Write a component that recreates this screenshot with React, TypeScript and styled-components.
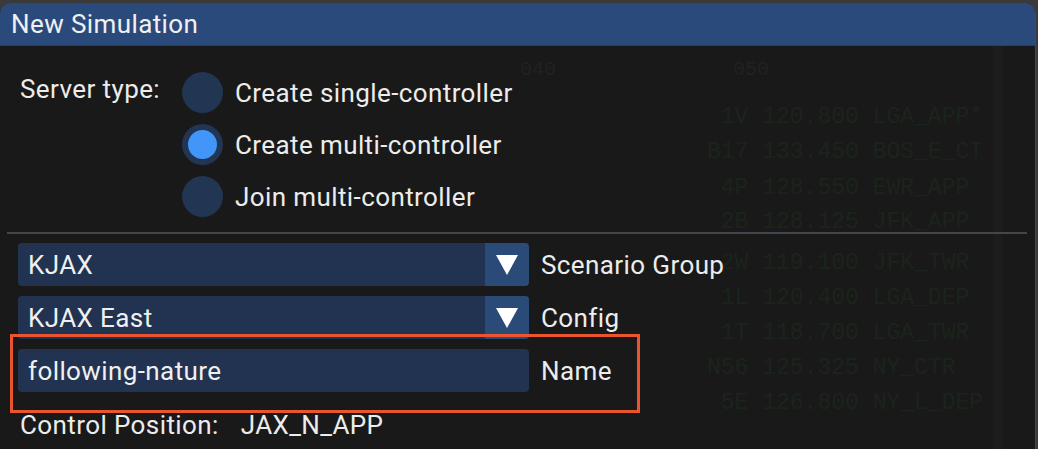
import React from "react";
import styled, { createGlobalStyle } from "styled-components";

const GlobalStyle = createGlobalStyle`
  html, body { margin: 0; padding: 0; background: #3a3a3a; }
  body { font-family: Roboto, "Noto Sans", "Liberation Sans", sans-serif; color: #ececec; }
  * { box-sizing: border-box; }
`;

const Window = styled.div`
  margin-top: 3px;
  width: 1036px;
  height: 446px;
  background: #191919;
  border-right: 1px solid #4a4a4a;
  border-radius: 10px 10px 0 0;
  overflow: hidden;
  position: relative;
  display: flex;
  flex-direction: column;
  font-size: 26px;
  letter-spacing: 0.4px;
`;

const TitleBar = styled.div`
  height: 43px;
  flex: none;
  background: #2b4a7c;
  display: flex;
  align-items: center;
  padding-left: 11px;
  line-height: 1;
  color: #f0f0f0;
  border-bottom: 1px solid #243f6a;
`;

const Body = styled.div`
  position: relative;
  flex: 1;
  display: flex;
  flex-direction: column;
`;

const Scope = styled.div`
  position: absolute;
  inset: 0;
  pointer-events: none;
  font-family: "Liberation Mono", "DejaVu Sans Mono", monospace;
  letter-spacing: 0;
`;

const ScopeBand = styled.div`
  position: absolute;
  top: 0;
  bottom: 0;
  left: 993px;
  width: 10px;
  background: #1c1c1c;
`;

const ScopeText = styled.div<{ $dim?: boolean }>`
  position: absolute;
  font-size: ${(p) => (p.$dim ? "20px" : "23px")};
  color: ${(p) => (p.$dim ? "#212121" : "#1b241b")};
  white-space: pre;
  line-height: 1;
`;

const Content = styled.div`
  position: relative;
  display: flex;
  flex-direction: column;
  padding: 26px 0 0 0;
`;

const ServerRow = styled.div`
  display: flex;
  align-items: flex-start;
  padding-left: 20px;
`;

const FieldLabel = styled.div`
  line-height: 1;
  margin-top: 4px;
  width: 162px;
  flex: none;
  white-space: nowrap;
`;

const RadioList = styled.div`
  display: flex;
  flex-direction: column;
  gap: 11px;
`;

const RadioRow = styled.div`
  display: flex;
  align-items: center;
  gap: 12px;
  line-height: 1;
`;

const RadioCircle = styled.div<{ $checked?: boolean }>`
  width: 41px;
  height: 41px;
  flex: none;
  border-radius: 50%;
  background: #223553;
  display: flex;
  align-items: center;
  justify-content: center;
  &::after {
    content: "";
    display: ${(p) => (p.$checked ? "block" : "none")};
    width: 29px;
    height: 29px;
    border-radius: 50%;
    background: #4296fa;
  }
`;

const Separator = styled.div`
  height: 2px;
  background: #45454c;
  margin: 15px 8px 0 7px;
`;

const Fields = styled.div`
  display: flex;
  flex-direction: column;
  gap: 10px;
  padding: 9px 0 0 18px;
`;

const FieldRow = styled.div<{ $highlight?: boolean }>`
  position: relative;
  display: flex;
  align-items: center;
  gap: 12px;
  line-height: 1;
  &::before {
    content: "";
    display: ${(p) => (p.$highlight ? "block" : "none")};
    position: absolute;
    left: -8px;
    top: -15px;
    width: 624px;
    height: 73px;
    border: 3px solid #ea5530;
    pointer-events: none;
  }
`;

const Frame = styled.div`
  width: 511px;
  height: 43px;
  border-radius: 4px;
  background: #213350;
  display: flex;
  align-items: center;
  overflow: hidden;
  flex: none;
`;

const FrameText = styled.div`
  flex: 1;
  padding-left: 10px;
  color: #f0f0f0;
`;

const ArrowButton = styled.div`
  width: 44px;
  height: 100%;
  background: #2a4a78;
  display: flex;
  align-items: center;
  justify-content: center;
`;

const Caption = styled.div`
  color: #ececec;
  white-space: nowrap;
`;

const InfoRow = styled.div`
  display: flex;
  gap: 22px;
  line-height: 1;
  padding: 20px 0 0 20px;
`;

const Arrow = () => (
  <svg width="24" height="22" viewBox="0 0 24 22">
    <polygon points="1,1 23,1 12,21" fill="#ffffff" />
  </svg>
);

const scopeRows = [
  { cs: "1V", fr: "120.800", pos: "LGA_APP*", y: 60 },
  { cs: "B17", fr: "133.450", pos: "BOS_E_CT", y: 95 },
  { cs: "4P", fr: "128.550", pos: "EWR_APP", y: 131 },
  { cs: "2B", fr: "128.125", pos: "JFK_APP", y: 165 },
  { cs: "2W", fr: "119.100", pos: "JFK_TWR", y: 206 },
  { cs: "1L", fr: "120.400", pos: "LGA_DEP", y: 241 },
  { cs: "1T", fr: "118.700", pos: "LGA_TWR", y: 276 },
  { cs: "N56", fr: "125.325", pos: "NY_CTR", y: 311 },
  { cs: "5E", fr: "126.800", pos: "NY_L_DEP", y: 346 },
];

const bearings = [
  { t: "040", x: 520 },
  { t: "050", x: 733 },
];

export default function App() {
  return (
    <>
      <GlobalStyle />
      <Window>
        <TitleBar>New Simulation</TitleBar>
        <Body>
          <Scope>
            <ScopeBand />
            {bearings.map((b) => (
              <ScopeText key={b.t} $dim style={{ left: b.x, top: 14 }}>
                {b.t}
              </ScopeText>
            ))}
            {scopeRows.map((r) => (
              <ScopeText key={r.cs} style={{ left: 707, top: r.y }}>
                {r.cs.padStart(3, " ") + " " + r.fr + " " + r.pos}
              </ScopeText>
            ))}
          </Scope>
          <Content>
            <ServerRow>
              <FieldLabel>Server type:</FieldLabel>
              <RadioList>
                <RadioRow>
                  <RadioCircle />
                  Create single-controller
                </RadioRow>
                <RadioRow>
                  <RadioCircle $checked />
                  Create multi-controller
                </RadioRow>
                <RadioRow>
                  <RadioCircle />
                  Join multi-controller
                </RadioRow>
              </RadioList>
            </ServerRow>
            <Separator />
            <Fields>
              <FieldRow>
                <Frame>
                  <FrameText>KJAX</FrameText>
                  <ArrowButton>
                    <Arrow />
                  </ArrowButton>
                </Frame>
                <Caption>Scenario Group</Caption>
              </FieldRow>
              <FieldRow>
                <Frame>
                  <FrameText>KJAX East</FrameText>
                  <ArrowButton>
                    <Arrow />
                  </ArrowButton>
                </Frame>
                <Caption>Config</Caption>
              </FieldRow>
              <FieldRow $highlight>
                <Frame>
                  <FrameText>following-nature</FrameText>
                </Frame>
                <Caption>Name</Caption>
              </FieldRow>
            </Fields>
            <InfoRow>
              <span>Control Position:</span>
              <span>JAX_N_APP</span>
            </InfoRow>
          </Content>
        </Body>
      </Window>
    </>
  );
}
